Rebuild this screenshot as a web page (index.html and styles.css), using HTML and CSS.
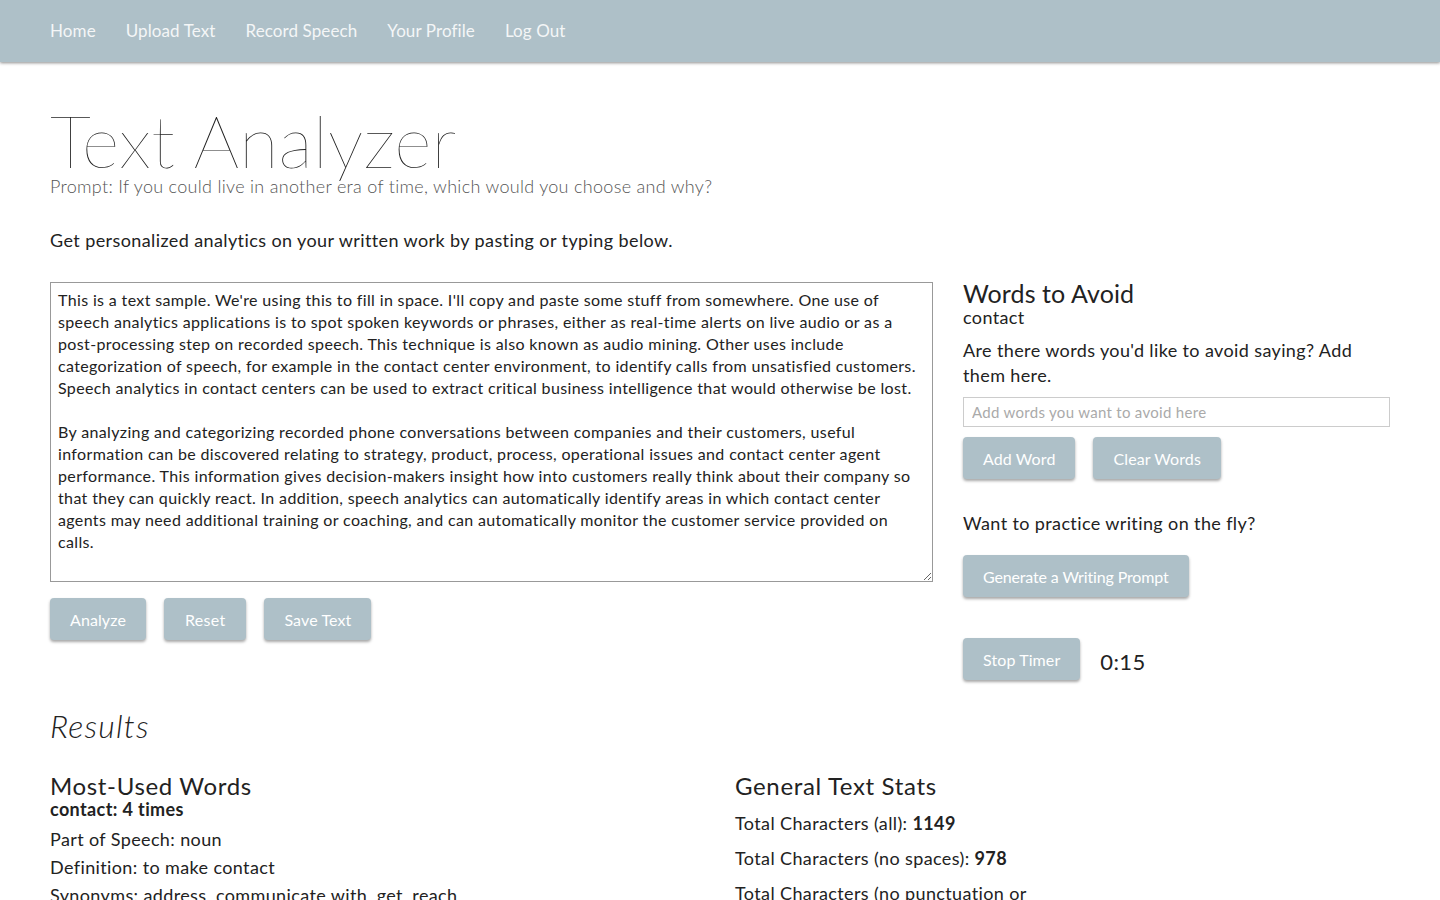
FILE: index.html
```html
<!DOCTYPE html>
<html lang="en">
<head>
<meta charset="utf-8">
<title>Text Analyzer</title>
<link rel="stylesheet" href="styles.css">
</head>
<body>
<nav class="navbar">
  <ul class="nav-links">
    <li><a href="#">Home</a></li>
    <li><a href="#">Upload Text</a></li>
    <li><a href="#">Record Speech</a></li>
    <li><a href="#">Your Profile</a></li>
    <li><a href="#">Log Out</a></li>
  </ul>
</nav>
<main class="container">
  <header class="page-header">
    <h1 class="title">Text Analyzer</h1>
    <p class="prompt">Prompt: If you could live in another era of time, which would you choose and why?</p>
  </header>
  <p class="intro">Get personalized analytics on your written work by pasting or typing below.</p>
  <div class="row">
    <section class="col-8">
      <textarea class="editor" wrap="off">This is a text sample. We're using this to fill in space. I'll copy and paste some stuff from somewhere. One use of
speech analytics applications is to spot spoken keywords or phrases, either as real-time alerts on live audio or as a
post-processing step on recorded speech. This technique is also known as audio mining. Other uses include
categorization of speech, for example in the contact center environment, to identify calls from unsatisfied customers.
Speech analytics in contact centers can be used to extract critical business intelligence that would otherwise be lost.

By analyzing and categorizing recorded phone conversations between companies and their customers, useful
information can be discovered relating to strategy, product, process, operational issues and contact center agent
performance. This information gives decision-makers insight how into customers really think about their company so
that they can quickly react. In addition, speech analytics can automatically identify areas in which contact center
agents may need additional training or coaching, and can automatically monitor the customer service provided on
calls.</textarea>
      <div class="btn-row">
        <button class="btn">Analyze</button>
        <button class="btn btn-reset">Reset</button>
        <button class="btn">Save Text</button>
      </div>
    </section>
    <aside class="col-4 side">
      <h3 class="side-title">Words to Avoid</h3>
      <div class="avoid-list">contact</div>
      <p class="side-text">Are there words you'd like to avoid saying? Add them here.</p>
      <input class="word-input" type="text" placeholder="Add words you want to avoid here">
      <div class="btn-row small">
        <button class="btn">Add Word</button>
        <button class="btn">Clear Words</button>
      </div>
      <p class="side-text practice">Want to practice writing on the fly?</p>
      <button class="btn btn-tight">Generate a Writing Prompt</button>
      <div class="timer-row">
        <button class="btn">Stop Timer</button>
        <span class="timer">0:15</span>
      </div>
    </aside>
  </div>
  <section class="results">
    <h2 class="results-title">Results</h2>
    <div class="row">
      <div class="col-6">
        <h3 class="res-head">Most-Used Words</h3>
        <p class="word-count">contact: 4 times</p>
        <p class="stat first">Part of Speech: noun</p>
        <p class="stat">Definition: to make contact</p>
        <p class="stat">Synonyms: address, communicate with, get, reach</p>
      </div>
      <div class="col-6">
        <div class="stats-box">
          <h3 class="res-head">General Text Stats</h3>
          <p class="stat wide top">Total Characters (all): <b>1149</b></p>
          <p class="stat wide">Total Characters (no spaces): <b>978</b></p>
          <p class="stat wide">Total Characters (no punctuation or spaces): <b>952</b></p>
        </div>
      </div>
    </div>
  </section>
</main>
</body>
</html>
```
FILE: styles.css
```css
* { box-sizing: border-box; }
html, body { margin: 0; padding: 0; }
body {
  font-family: Lato, "Open Sans", sans-serif;
  color: #222;
  background: #fff;
  overflow: hidden;
  letter-spacing: 0.38px;
}
.navbar {
  height: 62px;
  background: #aec0c8;
  box-shadow: 0 1px 3px rgba(0,0,0,0.45);
  padding: 0 50px;
  display: flex;
  align-items: center;
}
.nav-links {
  list-style: none;
  margin: 0;
  padding: 0;
  display: flex;
  gap: 30px;
}
.nav-links a {
  color: #f4f6f7;
  text-decoration: none;
  font-size: 17px;
  letter-spacing: 0.1px;
  position: relative;
  top: -1px;
}
.container { padding: 0 50px; }
.page-header { padding-top: 42px; }
.title {
  margin: 0;
  font-size: 72px;
  font-weight: 200;
  line-height: 72px;
  color: #222;
  letter-spacing: 0.2px;
}
.prompt {
  margin: 0;
  font-size: 18px;
  font-weight: 300;
  color: #555;
  line-height: 22px;
  letter-spacing: 0.3px;
  position: relative;
  top: -1px;
}
.intro {
  margin: 30px 0 0;
  font-size: 18px;
  line-height: 24px;
  letter-spacing: 0.4px;
}
.row {
  display: flex;
  gap: 30px;
}
.col-8 { width: 883px; flex: none; }
.col-4 { flex: 1; }
.col-6 { flex: 1; }
.editor {
  display: block;
  width: 883px;
  height: 300px;
  margin-top: 30px;
  border: 1px solid #999;
  padding: 6px 7px 5px;
  font-family: Lato, sans-serif;
  font-size: 16px;
  line-height: 22px;
  letter-spacing: 0.36px;
  color: #222;
  resize: vertical;
  overflow: hidden;
}
.btn-row {
  display: flex;
  gap: 18px;
  margin-top: 16px;
}
.btn {
  font-family: Lato, sans-serif;
  font-size: 16px;
  color: #fff;
  background: #aec0c8;
  border: none;
  border-radius: 4px;
  height: 42px;
  padding: 0 20px;
  box-shadow: 0 2px 3px rgba(0,0,0,0.35);
  letter-spacing: 0.1px;
}
.btn-reset { padding: 0 21px; letter-spacing: 0.3px; }
.btn-tight { letter-spacing: -0.15px; }
.side { padding-top: 28px; }
.side-title {
  margin: 0;
  font-size: 25px;
  font-weight: 400;
  line-height: 27px;
  letter-spacing: 0.1px;
}
.avoid-list {
  font-size: 18px;
  line-height: 20px;
}
.side-text {
  font-size: 18px;
  line-height: 25px;
  margin: 11px 0 9px;
}
.word-input {
  display: block;
  width: 100%;
  height: 30px;
  border: 1px solid #ccc;
  padding: 0 8px;
  font-family: Lato, sans-serif;
  font-size: 15px;
  letter-spacing: 0.3px;
}
.word-input::placeholder { color: #aaa; }
.btn-row.small { margin-top: 10px; }
.practice { margin: 32px 0 19px; }
.timer-row {
  display: flex;
  align-items: center;
  gap: 20px;
  margin-top: 41px;
}
.timer { font-size: 22px; padding-top: 4px; }
.results { margin-top: 26px; }
.results-title {
  margin: 0;
  font-size: 32px;
  font-weight: 300;
  font-style: italic;
  line-height: 40px;
  letter-spacing: 1.2px;
}
.results .row { margin-top: 27px; }
.res-head {
  margin: 0;
  font-size: 24px;
  font-weight: 400;
  line-height: 26px;
  letter-spacing: 0.65px;
}
.word-count {
  margin: 0;
  font-size: 18px;
  font-weight: 700;
  line-height: 20px;
}
.stat {
  margin: 8px 0 0;
  font-size: 18px;
  line-height: 20px;
}
.stat.first { margin-top: 10px; }
.stats-box { max-width: 312px; }
.stat.wide { margin: 15px 0 0; }
.stat.wide.top { margin-top: 14px; }
.stat b { font-weight: 700; }
```
